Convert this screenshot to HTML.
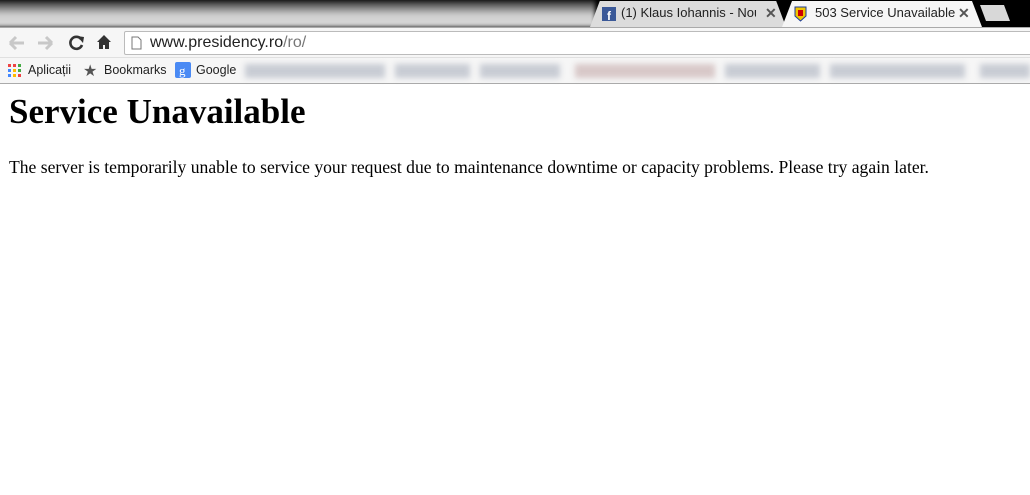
<!DOCTYPE html>
<html><head><meta charset="utf-8"><style>
*{margin:0;padding:0;box-sizing:border-box}
body{width:1030px;height:495px;overflow:hidden;background:#fff;font-family:"Liberation Sans",sans-serif;position:relative}
.strip{position:absolute;left:0;top:0;width:1030px;height:27px;background:#000}
.blur{position:absolute;left:-5px;top:0;width:600px;height:27px;background:linear-gradient(#222,#777 25%,#cfcfcf 55%,#dadada);filter:blur(2px)}
.tab{position:absolute;top:1px;height:26px;font-size:13px;color:#222;line-height:24px}
.tab1{left:590px;width:196px;background:#dcdcdc;clip-path:polygon(0 100%,5% 0,95% 0,100% 100%)}
.tab2{left:782px;width:200px;background:#f6f6f6;clip-path:polygon(0 100%,5% 0,95% 0,100% 100%);z-index:2}
.newt{position:absolute;left:980px;top:5px;width:30px;height:16px;background:#d8d8d8;clip-path:polygon(0 0,80% 0,100% 100%,20% 100%)}
.x{position:absolute;top:0;font-size:14px;color:#555;font-weight:bold}
.tool{position:absolute;top:27px;left:0;width:1030px;height:30px;background:#f6f6f6;border-top:1px solid #aaa}
.omni{position:absolute;left:124px;top:3px;width:910px;height:24px;background:#fff;border:1px solid #bbb;border-radius:2px;font-size:16px;line-height:22px;padding-left:25px;color:#222}
.bm{position:absolute;top:57px;left:0;width:1030px;height:27px;background:#f6f6f6;border-top:1px solid #e0e0e0;border-bottom:1px solid #aaa;font-size:12.5px;color:#222}
.bm span{position:absolute;top:5px}
.bl{position:absolute;top:6px;height:14px;background:#c8ccd4;filter:blur(3px)}
h1{position:absolute;left:9px;top:92px;font-family:"Liberation Serif",serif;font-size:35px;font-weight:bold;white-space:nowrap;line-height:40px}
p{position:absolute;left:9px;top:157px;font-family:"Liberation Serif",serif;font-size:17.6px;white-space:nowrap}
</style></head><body>
<div class="strip"><div class="blur"></div>
<div class="tab tab1"><svg style="position:absolute;left:12px;top:6px" width="14" height="14"><rect width="14" height="14" fill="#3b5998"/><text x="5" y="13" fill="#fff" font-size="12" font-weight="bold" font-family="Liberation Sans">f</text></svg><span style="position:absolute;left:31px;white-space:nowrap;width:135px;overflow:hidden">(1) Klaus Iohannis - Noul s</span><span class="x" style="left:175px">✕</span></div>
<div class="tab tab2"><svg style="position:absolute;left:12px;top:5px" width="13" height="16"><path d="M1 1h11v9l-5.5 5L1 10z" fill="#f0c400" stroke="#1a3a9a"/><rect x="4" y="4" width="5" height="6" fill="#c00"/></svg><span style="position:absolute;left:33px">503 Service Unavailable</span><span class="x" style="left:176px">✕</span></div>
<div class="newt"></div></div>
<div class="tool">
<svg style="position:absolute;left:7px;top:6px" width="80" height="18"><path d="M3 9h14M3 9l6-6M3 9l6 6" stroke="#c8c8c8" stroke-width="3" fill="none"/><path d="M31 9h14M45 9l-6-6M45 9l-6 6" stroke="#c8c8c8" stroke-width="3" fill="none"/><path d="M74 5a6 6 0 1 0 1 6" stroke="#333" stroke-width="2.6" fill="none"/><path d="M70 2l7 1-1 6z" fill="#333"/></svg>
<svg style="position:absolute;left:96px;top:6px" width="16" height="16"><path d="M8 1L1 8h2v7h4v-4h2v4h4V8h2z" fill="#333"/></svg>
<div class="omni"><svg style="position:absolute;left:6px;top:4px" width="11" height="14"><path d="M1 1h6l3 3v9H1z" fill="#fff" stroke="#777"/></svg>www.presidency.ro<span style="color:#777">/ro/</span></div></div>
<div class="bm">
<svg style="position:absolute;left:8px;top:6px" width="13" height="13"><g><rect x="0" y="0" width="3" height="3" fill="#e44"/><rect x="5" y="0" width="3" height="3" fill="#e44"/><rect x="10" y="0" width="3" height="3" fill="#4a4"/><rect x="0" y="5" width="3" height="3" fill="#48f"/><rect x="5" y="5" width="3" height="3" fill="#fb0"/><rect x="10" y="5" width="3" height="3" fill="#4a4"/><rect x="0" y="10" width="3" height="3" fill="#48f"/><rect x="5" y="10" width="3" height="3" fill="#fb0"/><rect x="10" y="10" width="3" height="3" fill="#e44"/></g></svg>
<span style="left:28px">Aplicații</span>
<span style="left:83px;top:3px;font-size:16px;color:#555">★</span><span style="left:104px">Bookmarks</span>
<svg style="position:absolute;left:175px;top:4px" width="16" height="16"><rect width="16" height="16" rx="2" fill="#4a8af4"/><text x="4" y="13" fill="#fff" font-size="13" font-family="Liberation Serif">g</text></svg>
<span style="left:196px">Google</span>
<div class="bl" style="left:245px;width:140px"></div><div class="bl" style="left:395px;width:75px"></div><div class="bl" style="left:480px;width:80px"></div><div class="bl" style="left:575px;width:140px;background:#d8c8c8"></div><div class="bl" style="left:725px;width:95px"></div><div class="bl" style="left:830px;width:135px"></div><div class="bl" style="left:980px;width:50px"></div>
</div>
<h1>Service Unavailable</h1>
<p>The server is temporarily unable to service your request due to maintenance downtime or capacity problems. Please try again later.</p>
</body></html>
